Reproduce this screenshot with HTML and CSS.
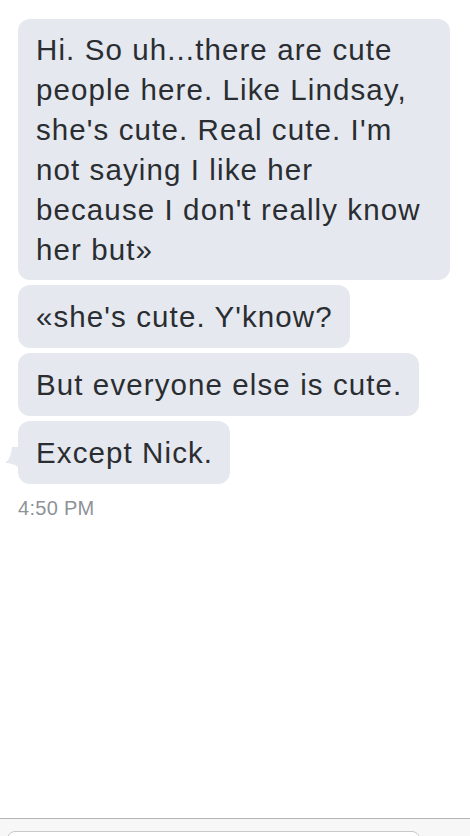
FILE: index.html
```html
<!DOCTYPE html>
<html>
<head>
<meta charset="utf-8">
<link rel="stylesheet" href="styles.css">
</head>
<body>
<div class="screen">
  <div class="thread">
    <div class="bubble first">Hi. So uh...there are cute people here. Like Lindsay, she's cute. Real cute. I'm not saying I like her because I don't really know her but»</div>
    <div class="bubble">«she's cute. Y'know?</div>
    <div class="bubble">But everyone else is cute.</div>
    <div class="bubble last">Except Nick.<svg class="tail" width="16" height="20" viewBox="0 0 16 20"><path d="M14 0 L14 20 C10 17 6 16 1 16 C5 13 7 9 8 0 Z" fill="#e5e8ee"/></svg></div>
    <div class="time">4:50 PM</div>
  </div>
  <div class="composer">
    <div class="input"></div>
  </div>
</div>
</body>
</html>
```
FILE: styles.css
```css
html, body {
  margin: 0;
  padding: 0;
  background: #ffffff;
}
.screen {
  width: 470px;
  height: 836px;
  display: flex;
  flex-direction: column;
  overflow: hidden;
  font-family: "Liberation Sans", Arial, sans-serif;
}
.thread {
  flex: 1;
  display: flex;
  flex-direction: column;
  align-items: flex-start;
  gap: 5px;
  padding: 19px 20px 0 18px;
}
.bubble {
  position: relative;
  background: #e5e8ee;
  color: #2a2d31;
  font-size: 29.5px;
  letter-spacing: 1.1px;
  line-height: 40px;
  padding: 12px 17px 11px 18px;
  border-radius: 12px;
  box-sizing: border-box;
}
.bubble.first {
  width: 432px;
  padding-right: 16px;
  padding-top: 11px;
  padding-bottom: 10px;
}
.tail {
  position: absolute;
  left: -14px;
  bottom: 17px;
}
.time {
  margin-top: 8px;
  font-size: 20px;
  letter-spacing: 0.3px;
  color: #8e9299;
}
.composer {
  flex: 0 0 auto;
  height: 5px;
  border-top: 1px solid #b5b5b7;
  background: #f7f7f8;
  padding: 12px 50px 0 7px;
  overflow: hidden;
}
.input {
  height: 20px;
  border: 1px solid #c8c8cc;
  border-radius: 8px;
  background: #fff;
}
```
